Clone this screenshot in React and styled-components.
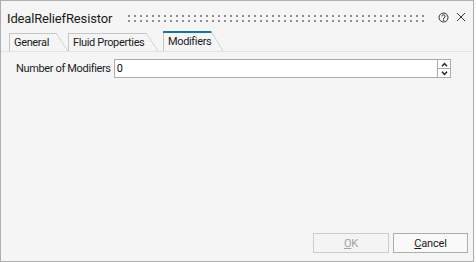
import styled, { createGlobalStyle } from "styled-components";

const GlobalStyle = createGlobalStyle`
  html, body {
    margin: 0;
    padding: 0;
    background: #f9f9f9;
  }
  body {
    font-family: Roboto, "Liberation Sans", sans-serif;
  }
`;

const Window = styled.div`
  box-sizing: border-box;
  width: 474px;
  height: 262px;
  border: 1px solid #aeaeae;
  background: #f5f5f5;
  color: #1b1b1b;
  display: flex;
  flex-direction: column;
`;

const TitleBar = styled.div`
  display: flex;
  align-items: center;
  height: 30px;
  padding: 0 7px 0 6px;
`;

const Title = styled.div`
  font-size: 13px;
  letter-spacing: -0.15px;
  margin-top: 5px;
  white-space: nowrap;
`;

const Grip = styled.div`
  flex: 1;
  height: 7px;
  margin: 4px 12px 0 16px;
  background-image: conic-gradient(from 270deg at 2px 2px, #8e8e8e 25%, transparent 0);
  background-size: 6px 5px;
`;

const TitleIcons = styled.div`
  display: flex;
  align-items: center;
  gap: 7px;
  margin-top: 2px;
`;

const TabBar = styled.div`
  display: flex;
  align-items: flex-end;
  height: 20px;
  padding-left: 8px;
`;

const Tab = styled.div`
  position: relative;
  box-sizing: border-box;
  width: ${(p) => p.$width}px;
  height: ${(p) => (p.$active ? 20 : 18)}px;
  margin-left: ${(p) => (p.$active ? 5 : 0)}px;
  padding: ${(p) => (p.$active ? "0 0 0 4px" : "1px 0 0 4px")};
  display: flex;
  align-items: center;
  font-size: 11px;
  letter-spacing: -0.35px;
  white-space: nowrap;
  border-left: 1px solid #c6c6c6;

  &::before {
    content: "";
    position: absolute;
    left: -1px;
    top: 0;
    right: 11px;
    height: ${(p) => (p.$active ? 2 : 1)}px;
    background: ${(p) => (p.$active ? "#1276a6" : "#c6c6c6")};
  }

  &::after {
    content: "";
    position: absolute;
    right: 0;
    top: 0;
    width: 12px;
    height: 100%;
    background: linear-gradient(
      to top right,
      transparent calc(50% - 0.7px),
      #cdcdcd 50%,
      transparent calc(50% + 0.7px)
    );
  }
`;

const Pane = styled.div`
  flex: 1;
  display: flex;
  flex-direction: column;
  border-top: 1px solid #e2e2e2;
  padding: 7px 22px 0 15px;
`;

const Row = styled.div`
  display: flex;
  align-items: center;
  gap: 3px;
`;

const Label = styled.label`
  font-size: 11px;
  letter-spacing: -0.35px;
  white-space: nowrap;
`;

const NumberBox = styled.div`
  flex: 1;
  display: flex;
  height: 19px;
`;

const Field = styled.input`
  flex: 1;
  min-width: 0;
  box-sizing: border-box;
  height: 19px;
  margin: 0;
  border: 1px solid #ababab;
  background: #fff;
  padding: 0 2px;
  font: 11px Roboto, "Liberation Sans", sans-serif;
  color: #111;
  outline: none;
`;

const Spin = styled.div`
  box-sizing: border-box;
  width: 13px;
  display: flex;
  flex-direction: column;
  border: 1px solid #ababab;
  border-left: none;
  background: #fff;
`;

const SpinButton = styled.div`
  flex: 1;
  display: flex;
  align-items: center;
  justify-content: center;

  & + & {
    border-top: 1px solid #ababab;
  }
`;

const Footer = styled.div`
  display: flex;
  justify-content: flex-end;
  gap: 4px;
  padding: 0 5px 8px 0;
`;

const Button = styled.button`
  box-sizing: border-box;
  width: ${(p) => p.$width}px;
  height: 20px;
  margin: 0;
  padding: 0;
  border: 1px solid ${(p) => (p.disabled ? "#cccccc" : "#adadad")};
  background: ${(p) => (p.disabled ? "#f4f4f4" : "#f9f9f9")};
  color: ${(p) => (p.disabled ? "#a2a2a2" : "#1b1b1b")};
  font: 11px Roboto, "Liberation Sans", sans-serif;
  letter-spacing: -0.2px;
`;

const HelpIcon = () => (
  <svg width="11" height="11" viewBox="0 0 11 11" fill="none" stroke="#333" strokeWidth="1">
    <circle cx="5.5" cy="5.5" r="4.5" />
    <path d="M3.9 4.3a1.6 1.6 0 1 1 2.2 1.5c-.5.2-.6.5-.6 1v.4" />
    <circle cx="5.5" cy="8.2" r="0.35" fill="#333" />
  </svg>
);

const CloseIcon = () => (
  <svg width="10" height="10" viewBox="0 0 10 10" stroke="#333" strokeWidth="1">
    <path d="M1 1l8 8M9 1l-8 8" />
  </svg>
);

const Chevron = ({ up }) => (
  <svg width="7" height="5" viewBox="0 0 7 5" fill="none" stroke="#222" strokeWidth="1.5">
    <path d={up ? "M1 4.2l2.5-2.7L6 4.2" : "M1 0.8l2.5 2.7L6 0.8"} />
  </svg>
);

export default function App() {
  return (
    <>
      <GlobalStyle />
      <Window>
        <TitleBar>
          <Title>IdealReliefResistor</Title>
          <Grip />
          <TitleIcons>
            <HelpIcon />
            <CloseIcon />
          </TitleIcons>
        </TitleBar>
        <TabBar>
          <Tab $width={59}>General</Tab>
          <Tab $width={90}>Fluid Properties</Tab>
          <Tab $width={60} $active>
            Modifiers
          </Tab>
        </TabBar>
        <Pane>
          <Row>
            <Label>Number of Modifiers</Label>
            <NumberBox>
              <Field value="0" readOnly />
              <Spin>
                <SpinButton>
                  <Chevron up />
                </SpinButton>
                <SpinButton>
                  <Chevron />
                </SpinButton>
              </Spin>
            </NumberBox>
          </Row>
        </Pane>
        <Footer>
          <Button $width={76} disabled>
            <u>O</u>K
          </Button>
          <Button $width={75}>
            <u>C</u>ancel
          </Button>
        </Footer>
      </Window>
    </>
  );
}
